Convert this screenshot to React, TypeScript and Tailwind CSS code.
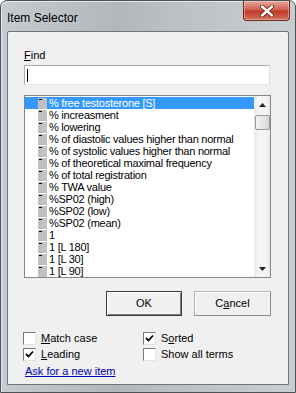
import React from "react";

const items = [
  "% free testosterone [S]",
  "% increasment",
  "% lowering",
  "% of diastolic values higher than normal",
  "% of systolic values higher than normal",
  "% of theoretical maximal frequency",
  "% of total registration",
  "% TWA value",
  "%SP02 (high)",
  "%SP02 (low)",
  "%SP02 (mean)",
  "1",
  "1 [L 180]",
  "1 [L 30]",
  "1 [L 90]",
];

const sans = "font-['Liberation_Sans',Arial,sans-serif]";

function Check({ checked }: { checked?: boolean }) {
  return (
    <span className="flex h-[13px] w-[13px] shrink-0 items-center justify-center border border-t-[#7a7a7a] border-l-[#7a7a7a] border-r-[#e3e3e3] border-b-[#e3e3e3] bg-white">
      {checked ? (
        <svg width="9" height="9" viewBox="0 0 9 9">
          <path d="M1 4 L3.5 6.5 L8 1.5" fill="none" stroke="#000" strokeWidth="1.8" />
        </svg>
      ) : null}
    </span>
  );
}

function Option({ checked, children }: { checked?: boolean; children: React.ReactNode }) {
  return (
    <div className="flex h-[16px] items-center gap-[5px]">
      <Check checked={checked} />
      <span className="leading-[13px]">{children}</span>
    </div>
  );
}

export default function App() {
  return (
    <div
      className={`${sans} flex h-[393px] w-[296px] flex-col rounded-t-[7px] border border-[#4d5257] bg-[linear-gradient(to_right,#c6cbd0,#b2b7bc_40%,#bcc1c6_60%,#c8cdd2)] text-[11px] text-black shadow-[inset_1px_1px_0_#e4e8ec]`}
    >
      {/* title bar */}
      <div className="flex h-[30px] shrink-0 items-start">
        <span className="pl-[6px] pt-[10px] text-[12px] leading-[14px] text-black">Item Selector</span>
        <div className="ml-auto mr-[5px] flex h-[20px] w-[47px] items-center justify-center rounded-b-[4px] border border-t-0 border-[#6d2a22] bg-[linear-gradient(to_bottom,#e8a89d,#cf6150_45%,#bd3a26_55%,#d4725f)] shadow-[inset_0_0_0_1px_rgba(255,255,255,0.35)]">
          <svg width="14" height="12" viewBox="0 0 14 12">
            <path d="M2 1.5 L12 10.5 M12 1.5 L2 10.5" stroke="#5a1f18" strokeWidth="4" strokeLinecap="round" />
            <path d="M2 1.5 L12 10.5 M12 1.5 L2 10.5" stroke="#fff" strokeWidth="2.4" strokeLinecap="round" />
          </svg>
        </div>
      </div>

      {/* client area */}
      <div className="mx-[6px] flex h-[354px] shrink-0 flex-col rounded-t-[2px] border border-[#6f757b] bg-[#f0f0f0] pl-[16px] pt-[17px]">
        <label className="block h-[13px] leading-[13px]">
          <span className="underline">F</span>ind
        </label>
        <div className="mt-[3px] flex h-[20px] w-[246px] items-center border border-[#abadb3] border-b-[#e3e9ef] border-r-[#dbdfe6] bg-white pl-[2px]">
          <span className="h-[13px] w-px bg-black" />
        </div>

        {/* list box */}
        <div className="mt-[10px] flex h-[183px] w-[247px] border border-[#828790] bg-white">
          <div className="flex w-[229px] flex-col overflow-hidden pt-px tracking-[-0.25px]">
            {items.map((item, i) => (
              <div
                key={item}
                className={`flex h-[12px] shrink-0 items-center whitespace-nowrap ${i === 0 ? "bg-[#3399ff] text-white" : ""}`}
              >
                <span className="ml-[13px] mr-[2px] flex h-[11px] w-[9px] shrink-0 items-start bg-[#c0c0c0] pl-px pt-px">
                  <span className="h-px w-[3px] bg-black" />
                </span>
                <span className="leading-[12px]">{item}</span>
              </div>
            ))}
          </div>
          <div className="flex w-[16px] flex-col items-center bg-[linear-gradient(to_right,#e9e9e9,#f5f5f5_30%,#f5f5f5_70%,#e9e9e9)]">
            <div className="flex h-[17px] w-full items-center justify-center">
              <svg width="7" height="4" viewBox="0 0 7 4">
                <path d="M3.5 0 L7 4 L0 4 Z" fill="#222" />
              </svg>
            </div>
            <div className="mt-[2px] h-[15px] w-[15px] rounded-[2px] border border-[#979797] bg-[linear-gradient(to_right,#f4f4f4,#e6e6e6_50%,#d8d8d8)]" />
            <div className="mt-auto flex h-[17px] w-full items-center justify-center">
              <svg width="7" height="4" viewBox="0 0 7 4">
                <path d="M0 0 L7 0 L3.5 4 Z" fill="#222" />
              </svg>
            </div>
          </div>
        </div>

        {/* buttons */}
        <div className="mt-[13px] flex w-[247px] justify-end gap-[12px]">
          <button className="flex h-[25px] w-[76px] items-center justify-center border border-[#3c3c3c] bg-[#f0f0f0] shadow-[inset_1px_1px_0_#ffffff,inset_-1px_-1px_0_#7a7a7a]">
            OK
          </button>
          <button className="flex h-[25px] w-[77px] items-center justify-center border border-[#b4b4b4] border-r-[#8a8a8a] border-b-[#8a8a8a] bg-[#f0f0f0] shadow-[inset_1px_1px_0_#ffffff]">
            C<span className="underline">a</span>ncel
          </button>
        </div>

        {/* options */}
        <div className="-ml-px mt-[14px] grid w-[240px] grid-cols-[120px_1fr]">
          <Option>
            <span className="underline">M</span>atch case
          </Option>
          <Option checked>
            S<span className="underline">o</span>rted
          </Option>
          <Option checked>
            <span className="underline">L</span>eading
          </Option>
          <Option>Show all terms</Option>
        </div>

        <a className="ml-px mt-[3px] block h-[13px] leading-[13px] text-[#0000b0] underline">Ask for a new item</a>
      </div>
    </div>
  );
}
